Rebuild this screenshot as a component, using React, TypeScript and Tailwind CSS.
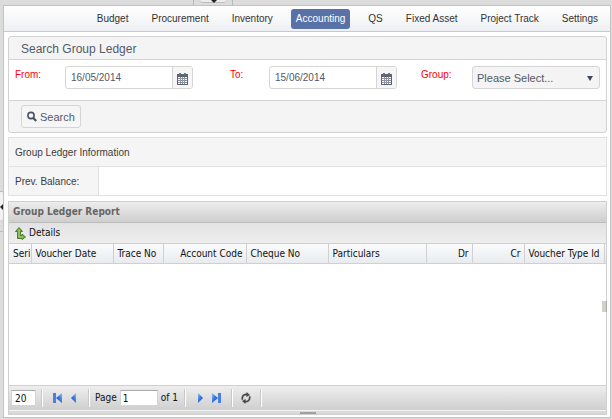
import React from "react";

const tabs = ["Budget", "Procurement", "Inventory", "Accounting", "QS", "Fixed Asset", "Project Track", "Settings"];

const columns = [
  { label: "Seri", width: "w-[22px]", align: "text-left" },
  { label: "Voucher Date", width: "w-[82px]", align: "text-left" },
  { label: "Trace No", width: "w-[50px]", align: "text-left" },
  { label: "Account Code", width: "w-[83px]", align: "text-right" },
  { label: "Cheque No", width: "w-[82px]", align: "text-left" },
  { label: "Particulars", width: "", align: "text-left" },
  { label: "Dr", width: "w-[46px]", align: "text-right" },
  { label: "Cr", width: "w-[52px]", align: "text-right" },
  { label: "Voucher Type Id", width: "w-[80px]", align: "text-left" },
];

function CalendarIcon() {
  return (
    <svg width="11" height="12" viewBox="0 0 11 12" shapeRendering="crispEdges" aria-hidden="true">
      <path d="M0 1h11v11H0z" fill="#5c6572" />
      <path d="M2 0h2v2H2zM7 0h2v2H7z" fill="#6b7480" />
      <path d="M1 4h9v7H1z" fill="#fff" />
      <path d="M3 4h1v7H3zM5 4h1v7H5zM7 4h1v7H7zM1 5h9v1H1zM1 7h9v1H1zM1 9h9v1H1z" fill="#8d949f" />
    </svg>
  );
}

function DateField({ id, label, value }: { id: string; label: string; value: string }) {
  return (
    <div className="flex h-[23px] min-w-0 rounded-[3px] border border-[#d5d5d5] bg-white">
      <input id={id} type="text" defaultValue={value} className="min-w-0 flex-1 bg-transparent pl-[5px] text-[10px] text-[#515967] outline-none" />
      <button type="button" aria-label={`Pick ${label} date`} className="flex w-5 shrink-0 items-center justify-center rounded-r-[2px] border-l border-[#d5d5d5] bg-[#f6f6f6] pt-[2px]">
        <CalendarIcon />
      </button>
    </div>
  );
}

function Separator() {
  return <span className="block h-[18px] w-[2px] border-r border-l border-r-white border-l-[#c8c8c8]" />;
}

function PageArrow({ back, end }: { back?: boolean; end?: boolean }) {
  return (
    <svg width="10" height="10" viewBox="0 0 10 10" className={back ? "-scale-x-100" : ""} aria-hidden="true">
      <defs>
        <linearGradient id="arrowBlue" x1="0" y1="0" x2="1" y2="1">
          <stop offset="0" stopColor="#8fc0f5" />
          <stop offset="0.5" stopColor="#2f74e0" />
          <stop offset="1" stopColor="#1748b8" />
        </linearGradient>
      </defs>
      <path d={end ? "M0 0L6 5L0 10Z" : "M3 0L8 5L3 10Z"} fill="url(#arrowBlue)" />
      {end && <rect x="6" y="0" width="3" height="10" fill="#4a80dc" />}
    </svg>
  );
}

function RefreshIcon() {
  return (
    <svg width="10" height="12" viewBox="0 0 10 12" aria-hidden="true">
      <path d="M1.3 7.8V6A3.7 3.7 0 0 1 6.4 2.6M8.7 4.2V6A3.7 3.7 0 0 1 3.6 9.4" fill="none" stroke="#4a4a4a" strokeWidth="1.7" />
      <path d="M5.6 0L9 3L5.3 5ZM4.4 12L1 9L4.7 7Z" fill="#4a4a4a" />
    </svg>
  );
}

export default function App() {
  return (
    <div className="flex min-h-screen flex-col bg-[#dcdcdc] font-['Liberation_Sans',Arial,sans-serif] text-[10px] leading-[14px] text-[#3c3c3c]">
      <div className="relative h-[5px]">
        <div className="absolute top-0 left-[193px] flex h-[5px] w-[40px] justify-center border-r border-l border-[#b9b9b9]">
          <span className="h-[3px] w-[26px] rounded-b-[3px] border-b border-[#bdbdbd] bg-[#ececec]" />
          <svg className="absolute top-0 left-[17px]" width="6" height="3" aria-hidden="true">
            <path d="M0 0H6L3 3Z" fill="#222" />
          </svg>
        </div>
      </div>

      <div className="relative flex flex-1">
        <div className="relative w-[3px] shrink-0">
          <div className="absolute top-[186px] left-0 h-[41px] w-[3px] border-t border-b border-[#bdbdbd]">
            <span className="block h-[28px] w-[3px] rounded-r-[2px] bg-[#f2f2f2]" />
            <svg className="absolute top-[12px] left-0" width="3" height="6" aria-hidden="true">
              <path d="M3 0V6L0 3Z" fill="#222" />
            </svg>
          </div>
        </div>
        <main className="mr-px mb-px flex min-w-0 flex-1 flex-col border border-[#c3c3c3] bg-white">
          <nav className="flex h-[26px] shrink-0 items-center justify-end gap-[13px] border-b border-[#c6cacf] bg-linear-to-b from-white to-[#eef0f3] pr-[7px]">
            {tabs.map((tab) => (
              <a
                key={tab}
                href="#"
                aria-current={tab === "Accounting" ? "page" : undefined}
                className={`flex h-5 items-center rounded-[3px] px-[5px] pt-px whitespace-nowrap ${tab === "Accounting" ? "bg-[#5871a7] text-white" : "text-[#333]"}`}
              >
                {tab}
              </a>
            ))}
          </nav>

          <div className="flex flex-1 flex-col pt-1 pr-[3px] pb-[2px] pl-1">
            <form className="rounded-[3px] border border-[#d2d2d2] bg-[#f4f4f4]" onSubmit={(e) => e.preventDefault()}>
              <h2 className="flex h-[23px] items-center border-b border-[#d6d6d6] pt-px pl-3 text-xs text-[#535b68]">Search Group Ledger</h2>
              <div className="grid h-[41px] grid-cols-[50px_minmax(0,1fr)_76px_minmax(0,1fr)_75px_minmax(0,1fr)] items-start border-b border-[#d6d6d6] bg-white pt-[6px] pr-[6px] pl-[6px]">
                <label htmlFor="from" className="pt-[2px] text-[#f00]">From:</label>
                <DateField id="from" label="from" value="16/05/2014" />
                <label htmlFor="to" className="pt-[2px] pl-[37px] text-[#f00]">To:</label>
                <DateField id="to" label="to" value="15/06/2014" />
                <label htmlFor="group" className="pt-[2px] pl-6 text-[#f00]">Group:</label>
                <div className="relative">
                  <select id="group" className="h-[23px] w-full appearance-none rounded-[3px] border border-[#d5d5d5] bg-[#f4f4f4] pl-1 text-[11px] text-[#515967]">
                    <option>Please Select...</option>
                  </select>
                  <svg className="pointer-events-none absolute top-[10px] right-[7px]" width="6" height="5" aria-hidden="true">
                    <path d="M0 0H6L3 5Z" fill="#3f4a59" />
                  </svg>
                </div>
              </div>
              <div className="flex h-[31px] items-center pl-3">
                <button type="submit" className="flex h-[23px] items-center gap-[3px] rounded-[3px] border border-[#d5d5d5] bg-[#f6f6f6] px-[5px] text-[11px] text-[#535b68]">
                  <svg width="10" height="11" viewBox="0 0 10 11" aria-hidden="true">
                    <circle cx="4" cy="4.5" r="3.1" fill="none" stroke="#4a5361" strokeWidth="1.6" />
                    <path d="M6.3 7L9.3 10" stroke="#4a5361" strokeWidth="2.2" />
                  </svg>
                  Search
                </button>
              </div>
            </form>

            <section className="mt-1 border border-[#e1e1e1] bg-[#f5f5f5]">
              <h2 className="flex h-[29px] items-center border-b border-[#e1e1e1] pt-[2px] pl-[6px]">Group Ledger Information</h2>
              <div className="flex h-7">
                <div className="flex w-[90px] items-center border-r border-[#e1e1e1] pt-px pl-[6px]">Prev. Balance:</div>
                <div className="flex-1 bg-white" />
              </div>
            </section>

            <section className="mt-[5px] flex flex-1 flex-col border border-[#cfcfcf] bg-white font-['DejaVu_Sans_Condensed','Noto_Sans',sans-serif] text-[#111]">
              <h2 className="flex h-[21px] items-center border-b border-[#bcbcbc] bg-linear-to-b from-[#ededed] to-[#cecece] pl-1 font-bold text-[#666]">Group Ledger Report</h2>
              <div className="flex h-5 items-center bg-linear-to-b from-[#e2e2e2] to-[#eeeeee] pl-[6px]">
                <button type="button" className="flex items-center gap-[3px]">
                  <svg width="11" height="13" viewBox="0 0 11 13" aria-hidden="true">
                    <path d="M4 .5L7.5 4.5H5.5V8.5H7V7L10.5 10L7 12.5V11.5H2.5V4.5H.5Z" fill="#77ad49" stroke="#3e7420" strokeWidth=".9" />
                    <path d="M4 2.5V10H8" fill="none" stroke="#b5d99a" strokeWidth=".8" />
                  </svg>
                  Details
                </button>
              </div>
              <div className="flex flex-1 items-start">
                <table className="w-full table-fixed border-collapse">
                  <thead>
                    <tr className="h-5 bg-linear-to-b from-[#fbfbfb] to-[#e8eaee]">
                      {columns.map((c) => (
                        <th key={c.label} scope="col" className={`overflow-hidden border-t border-r border-b border-[#d0d0d0] pr-0 pl-1 font-normal whitespace-nowrap ${c.width} ${c.align}`}>
                          <span className={c.align === "text-right" ? "pr-[3px]" : ""}>{c.label}</span>
                        </th>
                      ))}
                      <td className="w-[2px] border-t border-b border-[#d0d0d0]" />
                    </tr>
                  </thead>
                </table>
              </div>
              <footer className="flex h-[25px] items-center border-t border-[#d0d0d0] bg-linear-to-b from-[#eeeeee] to-[#cfcfcf] pl-[2px]">
                <input aria-label="Rows per page" defaultValue="20" className="h-4 w-[25px] border border-[#d4d4d4] border-t-[#a9a9a9] bg-white pl-[3px] outline-none" />
                <span className="flex flex-1 items-center pl-[5px]">
                  <Separator />
                  <button type="button" aria-label="First page" className="ml-[9px]"><PageArrow back end /></button>
                  <button type="button" aria-label="Previous page" className="ml-[7px]"><PageArrow back /></button>
                  <span className="ml-[9px]"><Separator /></span>
                  <label htmlFor="page" className="ml-[5px]">Page</label>
                  <input id="page" defaultValue="1" className="ml-[3px] h-4 w-[38px] border border-[#d4d4d4] border-t-[#a9a9a9] bg-white pl-[2px] outline-none" />
                  <span className="ml-[3px]">of 1</span>
                  <span className="ml-[6px]"><Separator /></span>
                  <button type="button" aria-label="Next page" className="ml-[9px]"><PageArrow /></button>
                  <button type="button" aria-label="Last page" className="ml-[7px]"><PageArrow end /></button>
                  <span className="ml-[9px]"><Separator /></span>
                  <button type="button" aria-label="Refresh" className="ml-[8px]"><RefreshIcon /></button>
                  <span className="ml-[9px]"><Separator /></span>
                </span>
              </footer>
              <div className="flex h-[4px] items-center justify-center border-t border-[#f4f4f4] bg-[#d9d9d9]">
                <span className="h-[2px] w-4 bg-[#a0a0a0]" />
              </div>
            </section>
          </div>
        </main>
        <span className="absolute top-[296px] right-[5px] h-[11px] w-[5px] border-r border-[#aaa] bg-[#d3d0c9]" />
      </div>
    </div>
  );
}
